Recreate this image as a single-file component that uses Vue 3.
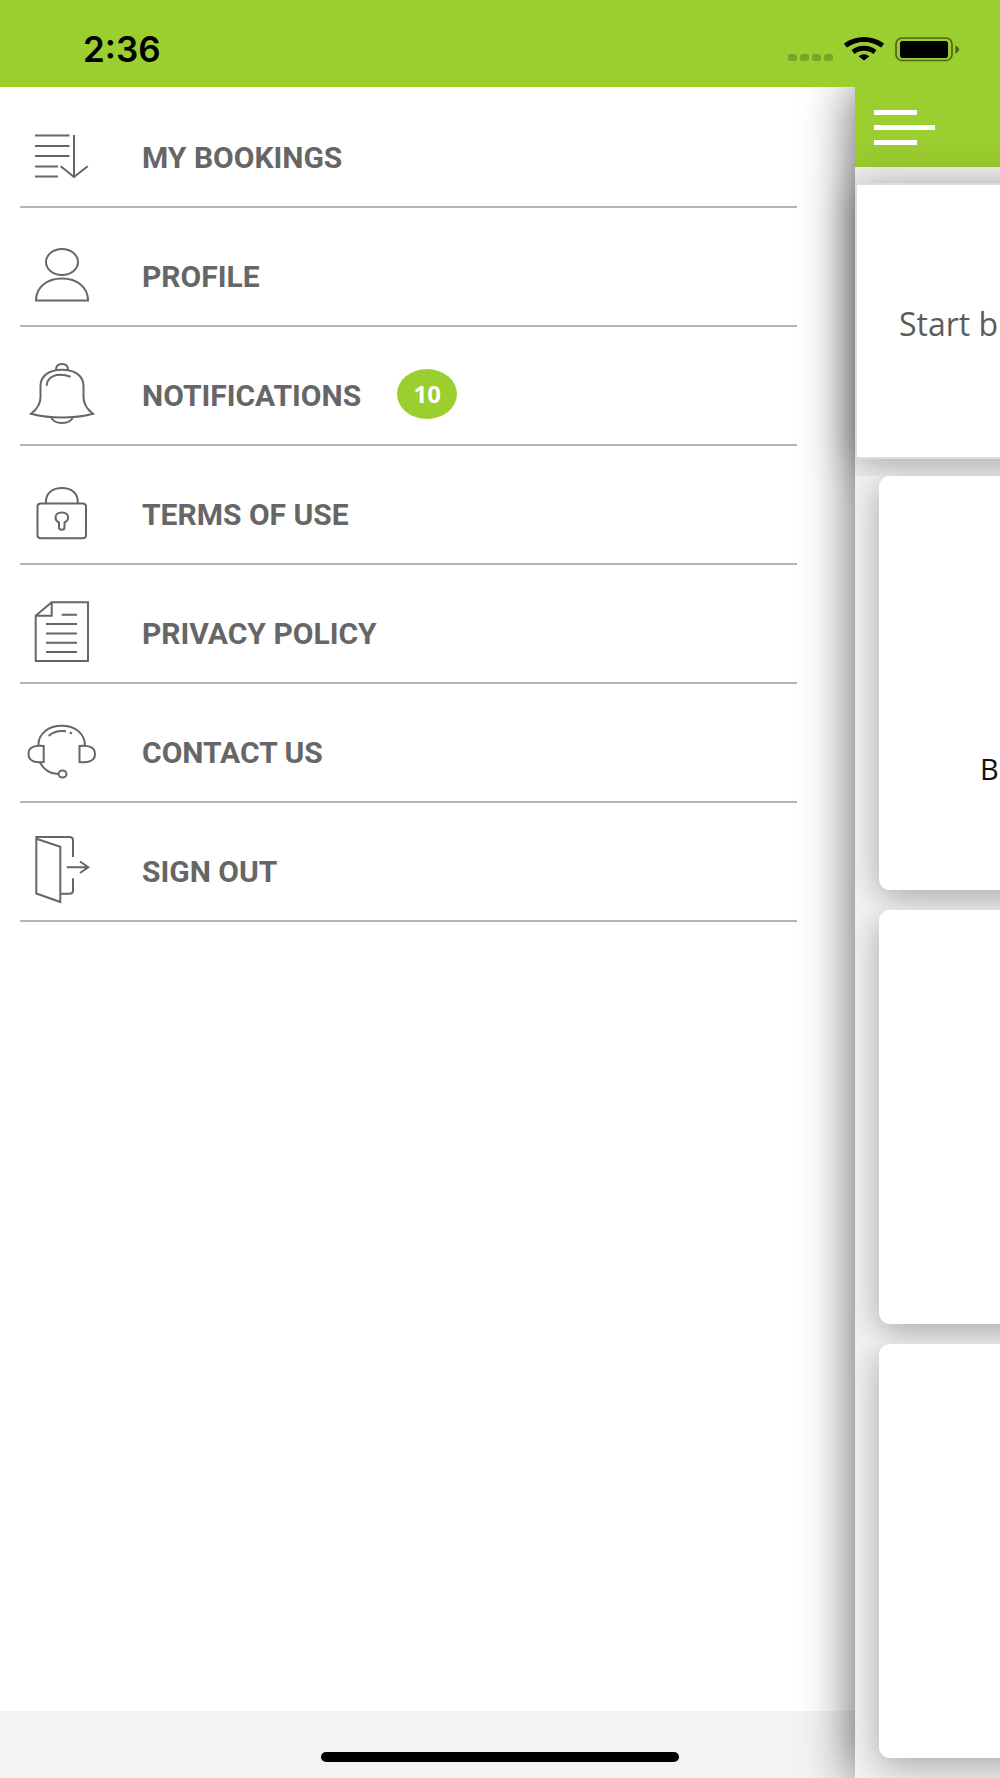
<script setup>
const items = [
  {
    id: 'bookings',
    label: 'MY BOOKINGS',
    paths: ['M11 19.5H45.5M11 30H45.5M11 40H45.5M11 50.5H34M11 60.5H34', 'M50 19V60.5M36.7 50.3L50 61L63.7 50.3']
  },
  {
    id: 'profile',
    label: 'PROFILE',
    paths: ['M22 27A16 13 0 1 1 54 27A16 13 0 1 1 22 27Z', 'M12 65.5C12 52 23 43.5 38 43.5S64 52 64 65.5Z']
  },
  {
    id: 'notifications',
    label: 'NOTIFICATIONS',
    badge: 10,
    paths: [
      'M32 16C32 12 34.5 10 38 10S44 12 44 16',
      'M38 15.7C25 15.7 16.5 22 16.5 32V43C16.5 50 12 56 7 59.7C26 64.8 50 64.8 69 59.7C64 56 59.5 50 59.5 43V32C59.5 22 51 15.7 38 15.7Z',
      'M27 63C30 71 46 71 49 63',
      'M22.7 31.7C23 23 32 18 46.7 22.7'
    ]
  },
  {
    id: 'terms',
    label: 'TERMS OF USE',
    paths: [
      'M17 30.5H58.5Q62 30.5 62 33.5V62.3Q62 65.3 58.5 65.3H17Q13.5 65.3 13.5 62.3V33.5Q13.5 30.5 17 30.5Z',
      'M22 30.5V28C22 20 29 15 38 15S53.7 20 53.7 28V30.5',
      'M35 49.5C33 48.5 31.5 46.5 31.5 44.5C31.5 41.5 34 39.5 37.8 39.5S44.2 41.5 44.2 44.5C44.2 46.5 42.5 48.5 40.5 49.5V54.5C40.5 57.5 35 57.5 35 54.5Z'
    ]
  },
  {
    id: 'privacy',
    label: 'PRIVACY POLICY',
    paths: ['M27.7 10.3H64V69H11.7V23.7ZM27.7 10.3V23.7H11.7', 'M37.7 22.7H53M22 32H53M22 41.5H53M22 50.7H53M22 60H53']
  },
  {
    id: 'contact',
    label: 'CONTACT US',
    paths: [
      'M14.3 34.5C14.3 22 25 14.7 37.7 14.7S61 22 61 34.5',
      'M19.7 35V51C10 52 4.5 49.5 4.5 43S10 34 19.7 35Z',
      'M55.5 35V51C65 52 71 49.5 71 43S65 34 55.5 35Z',
      'M16 51.7C20 58.5 25 63 34 63',
      'M34.5 63A4 3.5 0 1 1 42.5 63A4 3.5 0 1 1 34.5 63Z',
      'M24.7 25C29 21 35 19.5 42 20.3M45.7 21.3L48 22.7'
    ]
  },
  {
    id: 'sign-out',
    label: 'SIGN OUT',
    paths: [
      'M49 27V10Q49 7 45.5 7H12.3V63.5L36.3 72V16.7L12.3 8.7',
      'M36.3 63.7H45.5Q49 63.7 49 60.7V48.3',
      'M42.7 37.2H64.3M56 31.5L64.3 37.2L56 43'
    ]
  }
]

const cards = [{ title: 'B' }, { title: '' }, { title: '' }]
</script>

<template>
  <div class="screen">
    <header class="status">
      <time>2:36</time>
      <svg width="172" height="26" viewBox="0 0 172 26" aria-hidden="true">
        <g fill="#7ba229">
          <rect x="0" y="18" width="9" height="7" rx="2.5" />
          <rect x="12" y="18" width="9" height="7" rx="2.5" />
          <rect x="24" y="18" width="9" height="7" rx="2.5" />
          <rect x="36" y="18" width="9" height="7" rx="2.5" />
        </g>
        <g fill="none" stroke="#000" stroke-width="4.8">
          <path d="M57.4 9.7C68 1.4 84 1.4 94.6 9.7" />
          <path d="M65 16C71.5 11 80.5 11 87 16" />
        </g>
        <path d="M70.7 20.4C74 17.6 78 17.6 81.3 20.4L76 24.6Z" />
        <rect x="108" y="2" width="56" height="22.5" rx="6" fill="none" stroke="#000" stroke-opacity=".5" stroke-width="1.7" />
        <rect x="112" y="5" width="48" height="17" rx="2.5" />
        <path d="M167.3 9.5C172.3 11 172.3 16 167.3 17.5Z" fill-opacity=".5" />
      </svg>
    </header>

    <div class="body">
      <div class="drawer">
        <nav>
          <ul>
            <li v-for="item in items" :key="item.id">
              <a :href="'#' + item.id">
                <svg class="icon" width="76" height="80" viewBox="0 0 76 80" aria-hidden="true">
                  <path v-for="d in item.paths" :key="d" :d="d" />
                </svg>
                <span class="label">{{ item.label }}</span>
                <span v-if="item.badge" class="badge">{{ item.badge }}</span>
              </a>
            </li>
          </ul>
        </nav>
        <div class="safe-area"></div>
      </div>

      <main class="panel">
        <div class="toolbar">
          <button type="button" aria-label="Menu"><i></i><i class="long"></i><i></i></button>
        </div>
        <section class="intro">
          <p>Start b</p>
        </section>
        <section v-for="(card, i) in cards" :key="i" class="cell">
          <div class="card">{{ card.title }}</div>
        </section>
      </main>
    </div>
    <div class="home"></div>
  </div>
</template>

<style>
body {
  margin: 0;
}
</style>

<style scoped>
.screen {
  position: relative;
  display: flex;
  flex-direction: column;
  min-height: 100vh;
  overflow: hidden;
  background: #fff;
  font-family: Roboto, "Liberation Sans", sans-serif;
}
.status {
  position: relative;
  z-index: 2;
  display: flex;
  align-items: center;
  justify-content: space-between;
  box-sizing: border-box;
  height: 87px;
  padding: 10px 40px 0 83px;
  background: #9bce2f;
}
.status time {
  font: 600 35px/40px Inter, sans-serif;
  color: #000;
}
.body {
  display: flex;
  flex: 1;
}
.drawer {
  display: flex;
  flex-direction: column;
  flex: none;
  width: 85.5%;
}
nav {
  flex: 1;
  padding: 2px 58px 0 20px;
}
ul {
  margin: 0;
  padding: 0;
  list-style: none;
}
a {
  display: flex;
  align-items: center;
  box-sizing: border-box;
  height: 119px;
  padding: 16px 0 0 4px;
  border-bottom: 2px solid #b4b4b4;
  color: #666;
  text-decoration: none;
}
.icon {
  flex: none;
  fill: none;
  stroke: #666;
  stroke-width: 2;
}
.label {
  margin-left: 42px;
  padding-top: 4px;
  font-size: 30px;
  font-weight: 700;
  line-height: 34px;
}
.badge {
  width: 60px;
  height: 50px;
  margin-left: 36px;
  border-radius: 50%;
  background: #9bce2f;
  color: #fff;
  font: 700 24px/50px "Open Sans", sans-serif;
  text-align: center;
}
.safe-area {
  height: 67px;
  background: #f3f3f3;
}
.panel {
  flex: 1;
  min-width: 0;
  background: #f3f3f3;
  box-shadow: 0 0 52px rgba(0, 0, 0, 0.66);
}
.toolbar {
  display: flex;
  align-items: center;
  height: 80px;
  padding-left: 19px;
  background: #9bce2f;
}
button {
  display: flex;
  flex-direction: column;
  gap: 10px;
  padding: 0;
  border: 0;
  background: none;
}
button i {
  width: 43px;
  height: 5px;
  background: #fff;
}
button .long {
  width: 61px;
}
.intro {
  display: flex;
  align-items: center;
  box-sizing: border-box;
  height: 276px;
  margin: 16px -60px 17px 0;
  padding: 6px 0 0 42px;
  border: 2px solid #ddd;
  background: #fff;
  box-shadow: 0 4px 40px rgba(0, 0, 0, 0.36);
}
.intro p {
  margin: 0;
  color: #5c5c5c;
  font: 400 32px/40px "Open Sans", sans-serif;
  white-space: nowrap;
}
.cell {
  margin-right: -60px;
  padding: 0 0 20px 24px;
  overflow: hidden;
  background: #f3f3f3;
}
.card {
  box-sizing: border-box;
  height: 414px;
  padding: 273px 0 0 101px;
  border-radius: 11px;
  background: #fff;
  box-shadow: 0 8px 36px rgba(0, 0, 0, 0.32);
  color: #111;
  font: 400 29px/40px "Open Sans", sans-serif;
}
.home {
  position: absolute;
  z-index: 3;
  bottom: 16px;
  left: 50%;
  width: 358px;
  height: 10px;
  margin-left: -179px;
  border-radius: 5px;
  background: #000;
}
</style>
